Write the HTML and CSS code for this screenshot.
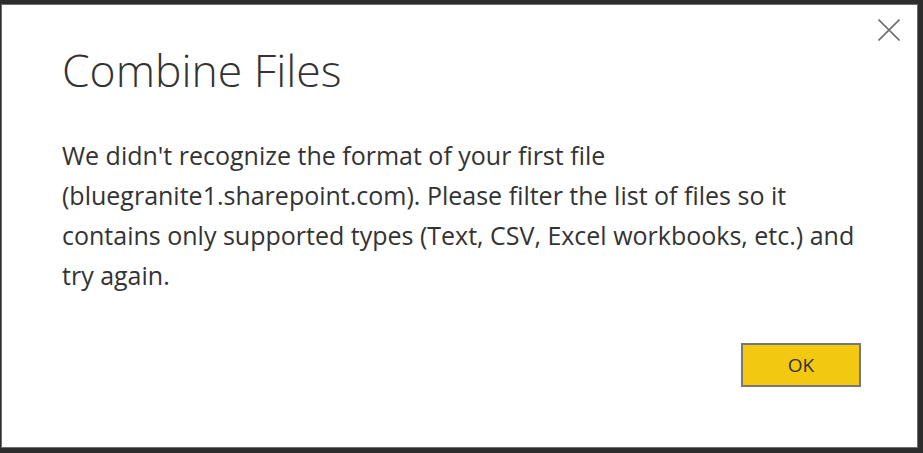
FILE: index.html
```html
<!DOCTYPE html>
<html lang="en">
<head>
<meta charset="utf-8">
<title>Combine Files</title>
<link rel="stylesheet" href="styles.css">
</head>
<body>
<div class="dialog">
  <div class="header">
    <h1 class="title">Combine Files</h1>
    <button class="close" aria-label="Close">
      <svg width="22" height="22" viewBox="0 0 22 22"><path d="M0.5 0.5 L21.5 21.5 M21.5 0.5 L0.5 21.5" stroke="#6f6f6f" stroke-width="1.6" fill="none"/></svg>
    </button>
  </div>
  <p class="message">We didn't recognize the format of your first file<br>(bluegranite1.sharepoint.com). Please filter the list of files so it<br>contains only supported types (Text, CSV, Excel workbooks, etc.) and<br>try again.</p>
  <div class="footer">
    <button class="ok">OK</button>
  </div>
</div>
</body>
</html>
```
FILE: styles.css
```css
html, body {
  margin: 0;
  padding: 0;
  background: #2d2d2d;
  height: 100%;
}
body {
  padding: 4px 4px 4px 1px;
  box-sizing: border-box;
  font-family: "Open Sans", "Segoe UI", sans-serif;
}
.dialog {
  width: 917px;
  height: 444px;
  box-sizing: border-box;
  background: #ffffff;
  border: 1px solid #6e6e6e;
  display: flex;
  flex-direction: column;
  padding: 0 56px 0 60px;
  position: relative;
}
.header {
  display: flex;
  justify-content: space-between;
  align-items: flex-start;
}
.title {
  margin: 35px 0 0 0;
  font-weight: 300;
  font-size: 44.5px;
  line-height: 60px;
  color: #333333;
}
.close {
  position: absolute;
  top: 14px;
  right: 17px;
  background: none;
  border: none;
  padding: 0;
  width: 22px;
  height: 22px;
  display: block;
}
.close svg { display: block; }
.message {
  margin: 35px 0 0 0;
  font-size: 25px;
  line-height: 40px;
  color: #333333;
  white-space: nowrap;
}
.footer {
  display: flex;
  justify-content: flex-end;
  margin-top: 48px;
}
.ok {
  box-sizing: border-box;
  width: 120px;
  height: 44px;
  background: #f2c811;
  border: 2px solid #777777;
  font-family: "Open Sans", "Segoe UI", sans-serif;
  font-size: 19px;
  color: #333333;
  padding: 0;
  cursor: pointer;
}
```
